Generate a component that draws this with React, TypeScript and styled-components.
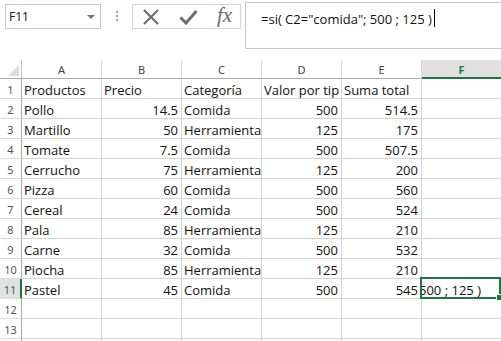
import React from "react";
import styled, { createGlobalStyle } from "styled-components";

const Global = createGlobalStyle`
  html, body { margin: 0; padding: 0; background: #ffffff; overflow: hidden; }
  #root { width: 501px; height: 341px; overflow: hidden; }
`;

const CELL_FONT = `"Open Sans", "Liberation Sans", sans-serif`;
const UI_FONT = `"Noto Sans", "Open Sans", sans-serif`;
const GREEN = "#217346";

const Window = styled.div`
  width: 501px;
  height: 341px;
  display: flex;
  flex-direction: column;
  background: #ffffff;
  overflow: hidden;
`;

const TopBar = styled.div`
  height: 60px;
  flex: none;
  display: flex;
  align-items: flex-start;
`;

const NameBox = styled.div`
  margin: 4px 0 0 5px;
  width: 96px;
  height: 25px;
  box-sizing: border-box;
  border: 1px solid #c8c8c8;
  display: flex;
  align-items: center;
  justify-content: space-between;
  padding: 0 5px 0 3px;
  font-family: ${UI_FONT};
  font-size: 12px;
  color: #222;
`;

const DropArrow = styled.span`
  width: 0;
  height: 0;
  border-left: 4px solid transparent;
  border-right: 4px solid transparent;
  border-top: 4px solid #777;
`;

const Grip = styled.div`
  margin: 11px 0 0 15px;
  display: flex;
  flex-direction: column;
  gap: 2px;
`;

const GripDot = styled.span`
  width: 2px;
  height: 2px;
  background: #a0a0a0;
`;

const FxButtons = styled.div`
  margin: 4px 0 0 14px;
  width: 109px;
  height: 25px;
  box-sizing: border-box;
  border: 1px solid #d4d4d4;
  display: flex;
  align-items: center;
  padding-left: 9px;
  gap: 19px;
`;

const FxText = styled.span`
  font-family: "Liberation Serif", "DejaVu Serif", serif;
  font-style: italic;
  font-size: 21px;
  color: #6a6a6a;
  line-height: 1;
  margin-top: -2px;
`;

const FormulaBox = styled.div`
  margin: 2px 0 0 4px;
  flex: 1;
  height: 47px;
  box-sizing: border-box;
  border: 1px solid #c8c8c8;
  border-right: none;
  padding: 7px 0 0 15px;
  font-family: ${CELL_FONT};
  font-size: 13px;
  color: #111;
  display: flex;
  align-items: flex-start;
  white-space: pre;
`;

const Caret = styled.span`
  display: inline-block;
  width: 1px;
  height: 18px;
  background: #000;
  margin-left: 2px;
  margin-top: -1px;
`;

const Sheet = styled.div`
  display: grid;
  grid-template-columns: 22px repeat(6, 80px);
  grid-template-rows: 19px;
  grid-auto-rows: 20px;
  width: 502px;
`;

const Corner = styled.div`
  box-sizing: border-box;
  border-right: 1px solid #c0c0c0;
  border-bottom: 1px solid #ababab;
  position: relative;
  &::after {
    content: "";
    position: absolute;
    right: 2px;
    bottom: 2px;
    width: 0;
    height: 0;
    border-left: 11px solid transparent;
    border-bottom: 11px solid #dcdcdc;
  }
`;

const ColHead = styled.div<{ $active?: boolean }>`
  box-sizing: border-box;
  border-right: 1px solid #dadada;
  border-bottom: ${(p) => (p.$active ? `2px solid ${GREEN}` : "1px solid #ababab")};
  background: ${(p) => (p.$active ? "#e1e1e1" : "#ffffff")};
  color: ${(p) => (p.$active ? GREEN : "#444")};
  font-weight: ${(p) => (p.$active ? 700 : 400)};
  font-family: ${UI_FONT};
  font-size: 11px;
  display: flex;
  align-items: center;
  justify-content: center;
  padding-top: 1px;
`;

const RowHead = styled.div<{ $active?: boolean }>`
  box-sizing: border-box;
  border-right: ${(p) => (p.$active ? `2px solid ${GREEN}` : "1px solid #ababab")};
  border-bottom: 1px solid #dadada;
  background: ${(p) => (p.$active ? "#e1e1e1" : "#ffffff")};
  color: ${(p) => (p.$active ? GREEN : "#555")};
  font-family: ${UI_FONT};
  font-size: 11px;
  display: flex;
  align-items: center;
  justify-content: center;
  padding-top: 2px;
`;

const Cell = styled.div<{ $num?: boolean }>`
  box-sizing: border-box;
  border-right: 1px solid #d4d4d4;
  border-bottom: 1px solid #d4d4d4;
  font-family: ${CELL_FONT};
  font-size: 13px;
  color: #111;
  display: flex;
  align-items: center;
  justify-content: ${(p) => (p.$num ? "flex-end" : "flex-start")};
  padding: 3px ${(p) => (p.$num ? "3px" : "0")} 0 ${(p) => (p.$num ? "0" : "2px")};
  white-space: nowrap;
  overflow: hidden;
`;

const EditCell = styled(Cell)`
  position: relative;
  overflow: visible;
`;

const EditClip = styled.div`
  position: absolute;
  inset: 0;
  overflow: hidden;
  display: flex;
  align-items: center;
  padding-top: 3px;
`;

const EditText = styled.span`
  margin-left: -3px;
  white-space: pre;
`;

const Selection = styled.div`
  position: absolute;
  left: -2px;
  top: -2px;
  right: 0;
  bottom: -1px;
  border: 2px solid ${GREEN};
  pointer-events: none;
  &::after {
    content: "";
    position: absolute;
    right: -4px;
    bottom: -4px;
    width: 5px;
    height: 5px;
    background: ${GREEN};
    border: 1px solid #fff;
  }
`;

const CloseIcon = () => (
  <svg width="18" height="18" viewBox="0 0 18 18">
    <path d="M2 2 L16 16 M16 2 L2 16" stroke="#6e6e6e" strokeWidth="2.2" fill="none" />
  </svg>
);

const CheckIcon = () => (
  <svg width="19" height="16" viewBox="0 0 19 16">
    <path d="M1.5 8.5 L7 14 L17.5 2" stroke="#6e6e6e" strokeWidth="3" fill="none" strokeLinejoin="miter" />
  </svg>
);

type Row = [string, string, string, string, string];

const rows: Row[] = [
  ["Productos", "Precio", "Categoría", "Valor por tip", "Suma total"],
  ["Pollo", "14.5", "Comida", "500", "514.5"],
  ["Martillo", "50", "Herramienta", "125", "175"],
  ["Tomate", "7.5", "Comida", "500", "507.5"],
  ["Cerrucho", "75", "Herramienta", "125", "200"],
  ["Pizza", "60", "Comida", "500", "560"],
  ["Cereal", "24", "Comida", "500", "524"],
  ["Pala", "85", "Herramienta", "125", "210"],
  ["Carne", "32", "Comida", "500", "532"],
  ["Piocha", "85", "Herramienta", "125", "210"],
  ["Pastel", "45", "Comida", "500", "545"],
  ["", "", "", "", ""],
  ["", "", "", "", ""],
  ["", "", "", "", ""],
];

const cols = ["A", "B", "C", "D", "E", "F"];

const isNum = (v: string) => v !== "" && !isNaN(Number(v));

export default function App() {
  return (
    <Window>
      <Global />
      <TopBar>
        <NameBox>
          <span>F11</span>
          <DropArrow />
        </NameBox>
        <Grip>
          <GripDot />
          <GripDot />
          <GripDot />
        </Grip>
        <FxButtons>
          <CloseIcon />
          <CheckIcon />
          <FxText>fx</FxText>
        </FxButtons>
        <FormulaBox>
          {'=si( C2="comida"; 500 ; 125 )'}
          <Caret />
        </FormulaBox>
      </TopBar>
      <Sheet>
        <Corner />
        {cols.map((c) => (
          <ColHead key={c} $active={c === "F"}>
            {c}
          </ColHead>
        ))}
        {rows.map((r, i) => {
          const n = i + 1;
          return (
            <React.Fragment key={n}>
              <RowHead $active={n === 11}>{n <= 13 ? n : ""}</RowHead>
              {r.map((v, j) => (
                <Cell key={j} $num={isNum(v)}>
                  {v}
                </Cell>
              ))}
              {n === 11 ? (
                <EditCell>
                  <EditClip>
                    <EditText>{"500 ; 125 )"}</EditText>
                  </EditClip>
                  <Selection />
                </EditCell>
              ) : (
                <Cell />
              )}
            </React.Fragment>
          );
        })}
      </Sheet>
    </Window>
  );
}
